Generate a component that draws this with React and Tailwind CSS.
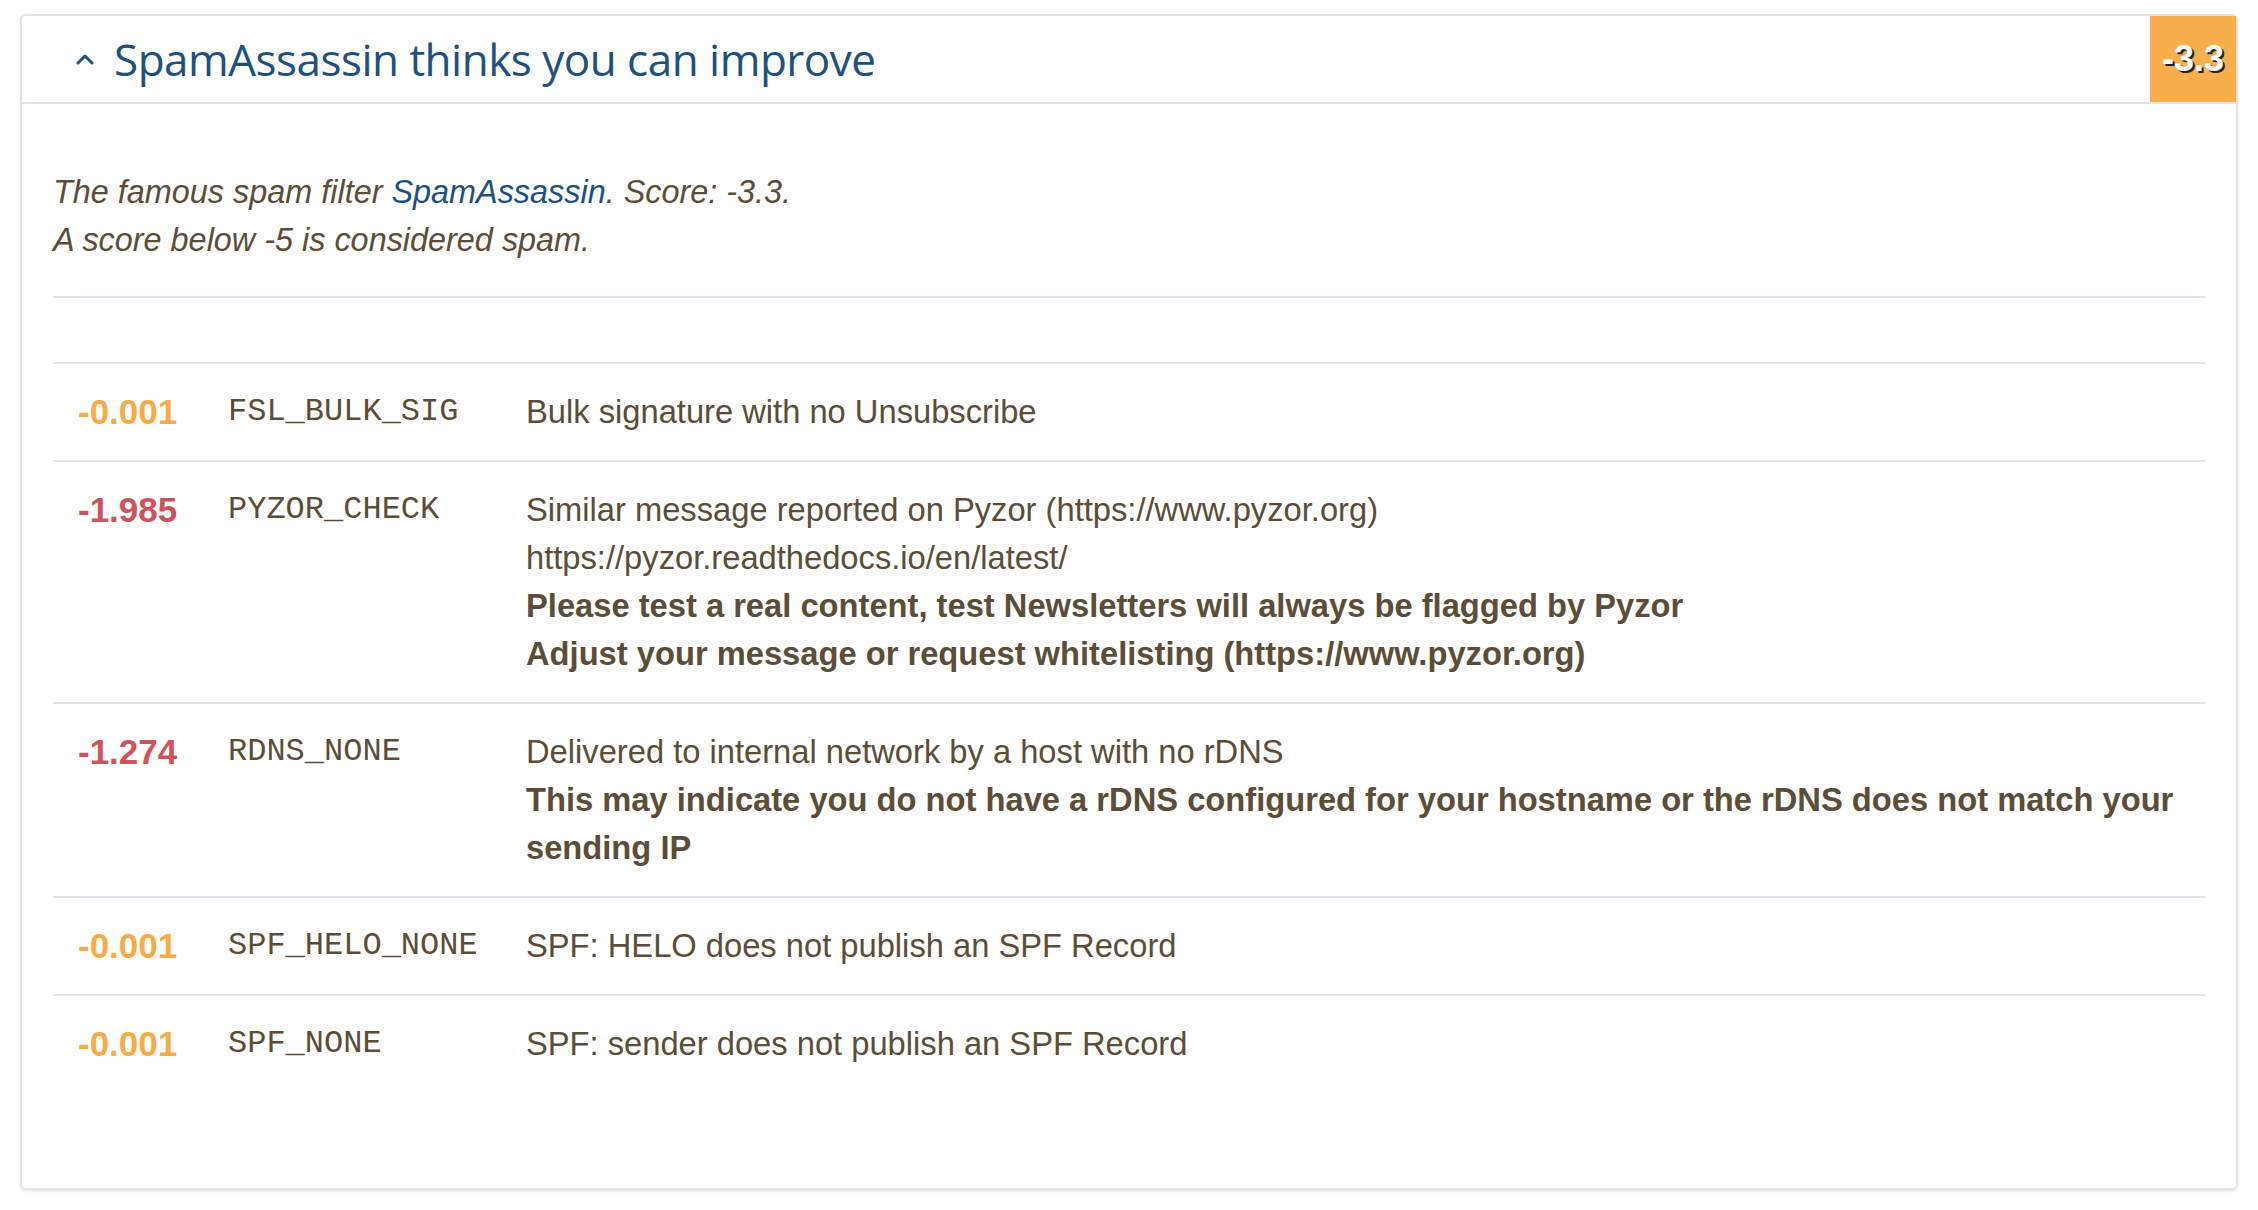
const RULES = [
  {
    score: '-0.001',
    tone: 'warn',
    name: 'FSL_BULK_SIG',
    lines: [{ text: 'Bulk signature with no Unsubscribe' }],
  },
  {
    score: '-1.985',
    tone: 'bad',
    name: 'PYZOR_CHECK',
    lines: [
      { text: 'Similar message reported on Pyzor (https://www.pyzor.org)' },
      { text: 'https://pyzor.readthedocs.io/en/latest/' },
      { text: 'Please test a real content, test Newsletters will always be flagged by Pyzor', bold: true },
      { text: 'Adjust your message or request whitelisting (https://www.pyzor.org)', bold: true },
    ],
  },
  {
    score: '-1.274',
    tone: 'bad',
    name: 'RDNS_NONE',
    lines: [
      { text: 'Delivered to internal network by a host with no rDNS' },
      { text: 'This may indicate you do not have a rDNS configured for your hostname or the rDNS does not match your sending IP', bold: true },
    ],
  },
  {
    score: '-0.001',
    tone: 'warn',
    name: 'SPF_HELO_NONE',
    lines: [{ text: 'SPF: HELO does not publish an SPF Record' }],
  },
  {
    score: '-0.001',
    tone: 'warn',
    name: 'SPF_NONE',
    lines: [{ text: 'SPF: sender does not publish an SPF Record' }],
  },
];

export default function App() {
  return (
    <div className="min-h-screen bg-white pt-[14px] pl-[20px] font-['Liberation_Sans',Arial,sans-serif] text-[#5b4d37]">
      <div className="w-[2218px] border-2 border-[#e1e4e8] rounded-md shadow-sm">
        {/* Header */}
        <div className="flex items-center h-[88px] border-b-2 border-[#e1e4e8]">
          <svg className="ml-[53px] w-[20px] h-[14px] text-[#22507c]" viewBox="0 0 20 14" fill="none" stroke="currentColor">
            <path d="M3 11l7-7 7 7" strokeWidth={3} strokeLinecap="round" strokeLinejoin="round" />
          </svg>
          <h2 className="ml-[19px] flex-1 font-['Open_Sans',sans-serif] text-[44px] leading-none text-[#22507c] tracking-[-0.5px]">
            SpamAssassin thinks you can improve
          </h2>
          <div className="self-stretch w-[86px] bg-[#f7ae4b] flex items-center justify-center">
            <span className="text-[36px] font-bold text-white [text-shadow:2px_2px_0_#222]">-3.3</span>
          </div>
        </div>

        {/* Body */}
        <div className="px-[31px] pt-16 pb-[96px]">
          <div className="italic text-[32.4px] leading-[48px] pb-[32px] border-b-2 border-[#e1e4e8]">
            <p>
              The famous spam filter <a className="text-[#22507c]">SpamAssassin</a>. Score: -3.3.
            </p>
            <p>A score below -5 is considered spam.</p>
          </div>

          <div className="mt-16">
            {RULES.map((r, i) => (
              <div key={i} className="flex border-t-2 border-[#e1e4e8] py-6 pl-[25px] text-[32.7px] leading-[48px]">
                <div className={`w-[150px] shrink-0 font-bold text-[35px] ${r.tone === 'bad' ? 'text-[#cf525c]' : 'text-[#f7ab47]'}`}>
                  {r.score}
                </div>
                <div className="w-[298px] shrink-0 font-['Liberation_Mono',monospace] text-[32px]">{r.name}</div>
                <div className="flex-1 pr-1">
                  {r.lines.map((l, j) => (
                    <p key={j} className={l.bold ? 'font-bold' : ''}>{l.text}</p>
                  ))}
                </div>
              </div>
            ))}
          </div>
        </div>
      </div>
    </div>
  );
}
